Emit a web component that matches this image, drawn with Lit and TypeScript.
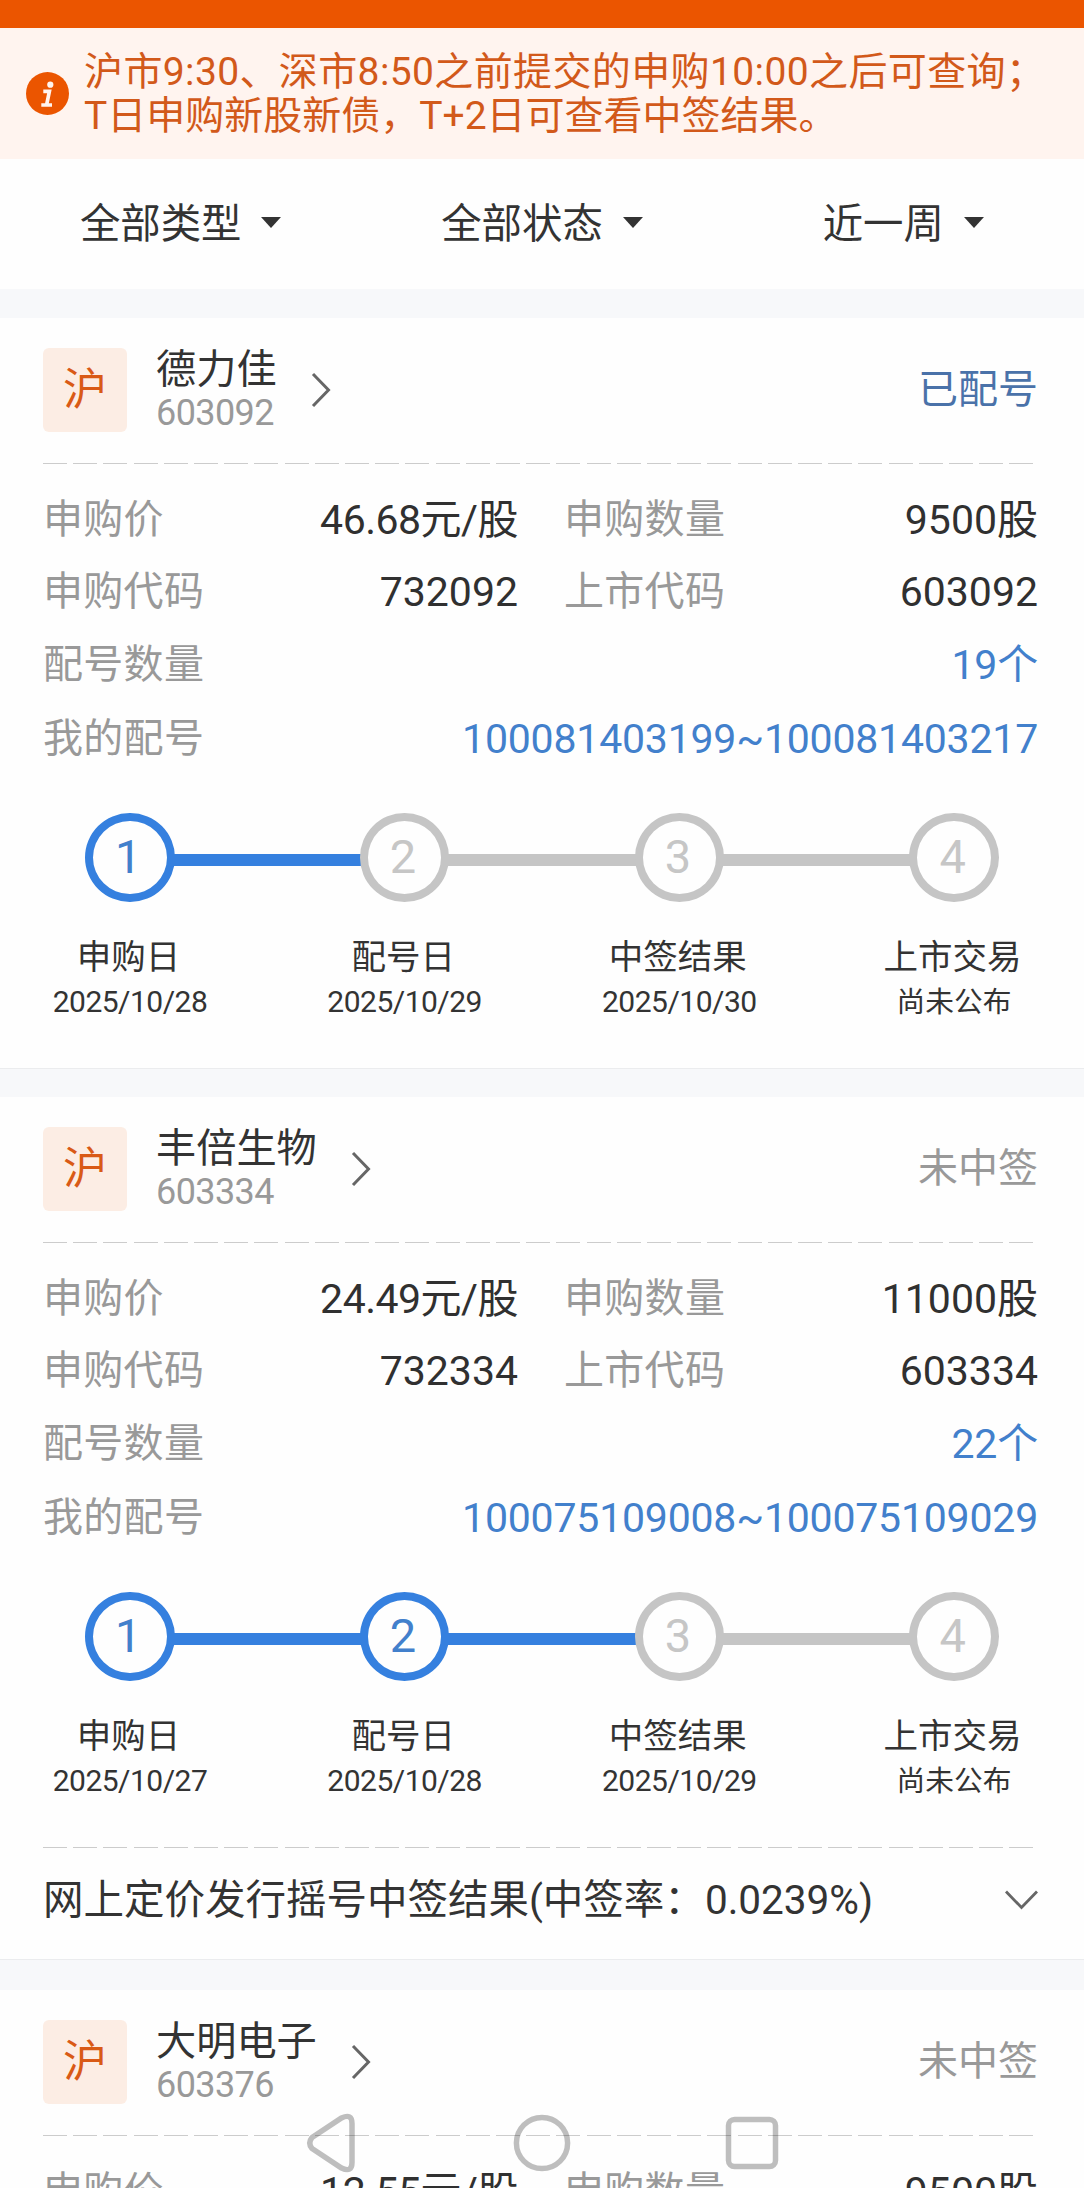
import { LitElement, html, css, svg, nothing } from "lit";
import { customElement, property } from "lit/decorators.js";

interface Step {
  label: string;
  date: string;
}

interface Subscription {
  name: string;
  code: string;
  status: string;
  allotted: boolean;
  price: string;
  amount: string;
  applyCode: string;
  count: string;
  numbers: string;
  done: number;
  steps: Step[];
  rate?: string;
}

const makeSteps = (dates: string[]): Step[] =>
  ["申购日", "配号日", "中签结果", "上市交易"].map((label, i) => ({ label, date: dates[i] }));

const ITEMS: Subscription[] = [
  {
    name: "德力佳",
    code: "603092",
    status: "已配号",
    allotted: true,
    price: "46.68元/股",
    amount: "9500股",
    applyCode: "732092",
    count: "19个",
    numbers: "100081403199~100081403217",
    done: 1,
    steps: makeSteps(["2025/10/28", "2025/10/29", "2025/10/30", "尚未公布"]),
  },
  {
    name: "丰倍生物",
    code: "603334",
    status: "未中签",
    allotted: false,
    price: "24.49元/股",
    amount: "11000股",
    applyCode: "732334",
    count: "22个",
    numbers: "100075109008~100075109029",
    done: 2,
    steps: makeSteps(["2025/10/27", "2025/10/28", "2025/10/29", "尚未公布"]),
    rate: "0.0239%",
  },
  {
    name: "大明电子",
    code: "603376",
    status: "未中签",
    allotted: false,
    price: "12.55元/股",
    amount: "9500股",
    applyCode: "",
    count: "",
    numbers: "",
    done: 0,
    steps: [],
  },
];

@customElement("step-track")
export class StepTrack extends LitElement {
  @property({ attribute: false }) steps: Step[] = [];
  @property({ type: Number }) done = 0;

  static styles = css`
    :host {
      display: block;
    }
    .track {
      display: flex;
      align-items: center;
      padding: 0 85px;
    }
    .dot {
      box-sizing: border-box;
      flex: none;
      width: 89.5px;
      height: 89px;
      border: 8.5px solid #c5c5c5;
      border-radius: 50%;
      color: #c6c6c6;
      font-size: 47px;
      font-weight: 400;
      line-height: 71px;
      text-align: center;
      text-indent: -3px;
    }
    .dot.on {
      border-color: #3580df;
      color: #4280cc;
    }
    .line {
      flex: 1;
      height: 12px;
      margin: 4px -1px 0;
      background: #c5c5c5;
    }
    .line.on {
      background: #3580df;
    }
    .captions {
      display: flex;
      justify-content: space-between;
      padding: 34px 50px 0;
    }
    .caption {
      width: 160px;
      text-align: center;
      white-space: nowrap;
      color: #333;
    }
    .label {
      font-size: 34.5px;
      line-height: 43px;
      text-indent: -3px;
    }
    .date {
      font-size: 30px;
      line-height: 44px;
      margin-top: 1px;
      letter-spacing: -0.5px;
    }
    .date.pending {
      font-size: 28.7px;
      letter-spacing: 0;
    }
  `;

  render() {
    return html`
      <div class="track">
        ${this.steps.map(
          (_, i) => html`
            ${i ? html`<div class="line ${i <= this.done ? "on" : ""}"></div>` : nothing}
            <div class="dot ${i < this.done ? "on" : ""}">${i + 1}</div>
          `
        )}
      </div>
      <div class="captions">
        ${this.steps.map(
          (s) => html`
            <div class="caption">
              <div class="label">${s.label}</div>
              <div class="date ${s.date.startsWith("2") ? "" : "pending"}">${s.date}</div>
            </div>
          `
        )}
      </div>
    `;
  }
}

@customElement("subscription-card")
export class SubscriptionCard extends LitElement {
  @property({ attribute: false }) item!: Subscription;

  static styles = css`
    :host {
      display: block;
      background: #fefefe;
    }
    .head {
      display: flex;
      align-items: center;
      padding: 30px 46px 0 43px;
      height: 84px;
    }
    .badge {
      width: 84px;
      height: 84px;
      border-radius: 6px;
      background: #fcede4;
      color: #d95a16;
      font-size: 44px;
      line-height: 84px;
      text-align: center;
    }
    .title {
      margin-left: 29px;
      padding-top: 2px;
      white-space: nowrap;
    }
    .name {
      font-size: 40.2px;
      line-height: 44px;
      color: #333;
    }
    .code {
      font-size: 36px;
      line-height: 42px;
      letter-spacing: -0.6px;
      color: #999;
    }
    .go {
      flex: none;
      margin-left: 34px;
    }
    .status {
      margin-left: auto;
      font-size: 40px;
      line-height: 44px;
      color: #999;
    }
    .status.allotted {
      color: #4a72a9;
    }
    .rule {
      height: 1px;
      margin: 31px 50px 0 43px;
      background: repeating-linear-gradient(90deg, #ccc 0 24px, transparent 24px 30.2px);
    }
    .facts {
      display: grid;
      grid-template-columns: 475px 474px;
      column-gap: 46px;
      grid-template-rows: 72px 72px 74px 73px;
      padding: 20px 0 0 43px;
    }
    .fact {
      display: flex;
      justify-content: space-between;
      align-items: center;
      white-space: nowrap;
    }
    .wide {
      grid-column: 1 / 3;
    }
    .key {
      font-size: 40px;
      letter-spacing: 0.3px;
      line-height: 48px;
      color: #999;
    }
    .value {
      font-size: 41px;
      line-height: 48px;
      color: #303030;
    }
    .price {
      letter-spacing: -0.5px;
    }
    .link {
      color: #4280cc;
      letter-spacing: -0.2px;
    }
    .track {
      padding: 38px 0 44px;
    }
    .result {
      display: flex;
      align-items: center;
      justify-content: space-between;
      height: 104px;
      padding: 0 46px 6px 43px;
      font-size: 40.5px;
      color: #333;
      white-space: nowrap;
    }
    .result span {
      margin-top: -8px;
    }
    .folded .track {
      padding-bottom: 0;
    }
    .folded .rule.last {
      margin-top: 44px;
    }
  `;

  private fact(key: string, value: string, cls = "", tone = "") {
    return html`
      <div class="fact ${cls}">
        <span class="key">${key}</span>
        <span class="value ${tone}">${value}</span>
      </div>
    `;
  }

  render() {
    const s = this.item;
    return html`
      <div class="card ${s.rate ? "folded" : ""}">
        <div class="head">
          <div class="badge">沪</div>
          <div class="title">
            <div class="name">${s.name}</div>
            <div class="code">${s.code}</div>
          </div>
          <svg class="go" width="20" height="36" viewBox="0 0 20 36" fill="none" stroke="#666" stroke-width="3">
            <path d="M2 2 L17.5 18 L2 34" />
          </svg>
          <div class="status ${s.allotted ? "allotted" : ""}">${s.status}</div>
        </div>
        <div class="rule"></div>
        <div class="facts">
          ${this.fact("申购价", s.price, "", "price")} ${this.fact("申购数量", s.amount)}
          ${s.numbers
            ? html`
                ${this.fact("申购代码", s.applyCode)} ${this.fact("上市代码", s.code)}
                ${this.fact("配号数量", s.count, "wide", "link")}
                ${this.fact("我的配号", s.numbers, "wide", "link")}
              `
            : nothing}
        </div>
        ${s.steps.length
          ? html`<div class="track"><step-track .steps=${s.steps} .done=${s.done}></step-track></div>`
          : nothing}
        ${s.rate
          ? html`
              <div class="rule last"></div>
              <div class="result">
                <span>网上定价发行摇号中签结果(中签率：${s.rate})</span>
                <svg width="34" height="22" viewBox="0 0 34 22" fill="none" stroke="#666" stroke-width="2.8">
                  <path d="M2 2.5 L17.5 18.5 L33 2.5" />
                </svg>
              </div>
            `
          : nothing}
      </div>
    `;
  }
}

@customElement("app-root")
export class AppRoot extends LitElement {
  static styles = css`
    :host {
      display: block;
      position: relative;
      width: 1084px;
      height: 2188px;
      overflow: hidden;
      background: #f7f8fa;
      font-family: Roboto, "Noto Sans CJK SC", sans-serif;
    }
    .bar {
      height: 28px;
      background: #eb5500;
    }
    .notice {
      display: flex;
      align-items: center;
      gap: 15px;
      height: 131px;
      padding-left: 26px;
      background: #fff4ef;
      color: #d2591a;
      font-size: 39px;
      line-height: 44px;
      white-space: nowrap;
    }
    .notice svg {
      flex: none;
    }
    .first {
      letter-spacing: 0.38px;
    }
    .filters {
      display: flex;
      height: 130px;
      background: #fefefe;
    }
    .filter {
      flex: 1;
      display: flex;
      align-items: center;
      justify-content: center;
      gap: 20px;
      padding-bottom: 4px;
      box-sizing: border-box;
      font-size: 40.4px;
      color: #333;
    }
    .filter span {
      margin-top: -3px;
    }
    .list {
      display: flex;
      flex-direction: column;
      padding-top: 29px;
    }
    .entry {
      flex: none;
      box-sizing: border-box;
      border-bottom: 1px solid #ebecee;
      margin-bottom: 28px;
      background: #fefefe;
    }
    .entry:nth-child(1) {
      height: 751px;
    }
    .entry:nth-child(2) {
      height: 863px;
      margin-bottom: 30px;
    }
    .entry:nth-child(3) {
      height: 751px;
    }
    .nav {
      position: absolute;
      left: 300px;
      top: 2108px;
    }
  `;

  render() {
    return html`
      <div class="bar"></div>
      <div class="notice">
        <svg width="43" height="43" viewBox="0 0 43 43">
          <circle cx="21.5" cy="21.5" r="21.5" fill="#eb5500" />
          <circle cx="24.3" cy="12.7" r="3.1" fill="#fff4ef" />
          <path d="M17.3 19.4 H23.4 L20.6 33 M15.3 33 H26" fill="none" stroke="#fff4ef" stroke-width="3.7" />
        </svg>
        <div>
          <div class="first">沪市9:30、深市8:50之前提交的申购10:00之后可查询；</div>
          <div>T日申购新股新债，T+2日可查看中签结果。</div>
        </div>
      </div>
      <div class="filters">
        ${["全部类型", "全部状态", "近一周"].map(
          (t) => html`
            <div class="filter">
              <span>${t}</span>
              <svg width="20" height="11" viewBox="0 0 20 11"><path d="M0 0 H20 L10 11 Z" fill="#333" /></svg>
            </div>
          `
        )}
      </div>
      <div class="list">
        ${ITEMS.map((i) => html`<div class="entry"><subscription-card .item=${i}></subscription-card></div>`)}
      </div>
      <svg class="nav" width="484" height="70" viewBox="0 0 484 70" fill="none" stroke="#000" stroke-opacity="0.25" stroke-width="5.5">
        ${svg`
          <path d="M12 29.5 L41.5 10 Q52 5 52 15.5 V54.5 Q52 65 41.5 60 L12 40.5 Q7.5 35 12 29.5 Z" />
          <circle cx="242" cy="35" r="25.6" />
          <rect x="428.5" y="11.5" width="47" height="47" rx="6" />
        `}
      </svg>
    `;
  }
}
